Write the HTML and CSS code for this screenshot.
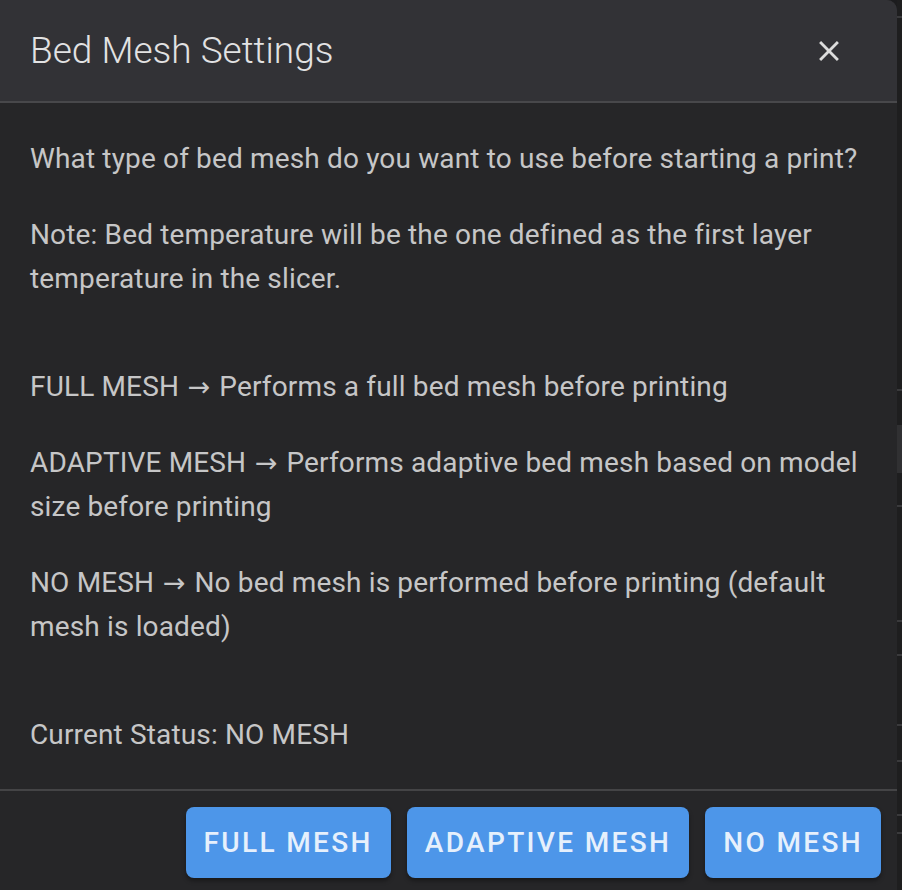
FILE: index.html
```html
<!DOCTYPE html>
<html>
<head>
<meta charset="utf-8">
<link rel="stylesheet" href="styles.css">
</head>
<body>
<div class="page">
  <div class="dialog">
    <div class="dialog-header">
      <h1 class="dialog-title">Bed Mesh Settings</h1>
      <button class="close-btn" aria-label="Close">
        <svg viewBox="0 0 24 24" width="34" height="34"><path d="M19 6.41 17.59 5 12 10.59 6.41 5 5 6.41 10.59 12 5 17.59 6.41 19 12 13.41 17.59 19 19 17.59 13.41 12z" fill="currentColor"/></svg>
      </button>
    </div>
    <div class="dialog-body">
      <p>What type of bed mesh do you want to use before starting a print?</p>
      <p>Note: Bed temperature will be the one defined as the first layer temperature in the slicer.</p>
      <div class="spacer"></div>
      <p>FULL MESH<span class="arrow"> → </span>Performs a full bed mesh before printing</p>
      <p>ADAPTIVE MESH<span class="arrow"> → </span>Performs adaptive bed mesh based on model size before printing</p>
      <p>NO MESH<span class="arrow"> → </span>No bed mesh is performed before printing (default mesh is loaded)</p>
      <div class="spacer"></div>
      <p>Current Status: NO MESH</p>
    </div>
    <div class="dialog-actions">
      <button class="btn">FULL MESH</button>
      <button class="btn">ADAPTIVE MESH</button>
      <button class="btn">NO MESH</button>
    </div>
  </div>
  <div class="side-strip">
    <div class="strip-line s1"></div>
    <div class="strip-line s2"></div>
    <div class="strip-block"></div>
    <div class="strip-line s3"></div>
    <div class="strip-line s4"></div>
    <div class="strip-line s5"></div>
    <div class="strip-line s6"></div>
    <div class="strip-line s7"></div>
    <div class="strip-line s8"></div>
    <div class="strip-line s9"></div>
  </div>
</div>
</body>
</html>
```

FILE: styles.css
```css
html, body {
  margin: 0;
  padding: 0;
  background: #1c1c1e;
  overflow: hidden;
}
.page {
  display: flex;
  width: 902px;
  height: 890px;
  font-family: Roboto, "Liberation Sans", sans-serif;
}
.dialog {
  width: 897px;
  flex: none;
  background: #262628;
  border-top-right-radius: 10px;
  overflow: hidden;
  display: flex;
  flex-direction: column;
}
.dialog-header {
  height: 103px;
  box-sizing: border-box;
  background: #323236;
  border-bottom: 2px solid #48484b;
  display: flex;
  align-items: center;
  justify-content: space-between;
  padding: 0 51px 0 30px;
  flex: none;
}
.dialog-title {
  margin: 0;
  font-size: 37px;
  font-weight: 300;
  color: #e2e2e3;
  letter-spacing: 0;
}
.close-btn {
  background: none;
  border: none;
  padding: 0;
  color: #dcdcdc;
  display: flex;
  cursor: pointer;
}
.dialog-body {
  padding: 34px 30px 32px 30px;
  color: #c6c6c7;
  font-size: 28px;
  letter-spacing: 0.15px;
  line-height: 44px;
  border-bottom: 2px solid #444446;
  flex: none;
}
.dialog-body p {
  margin: 0 0 32px 0;
}
.dialog-body p:last-child {
  margin-bottom: 0;
}
.arrow {
  font-family: "DejaVu Sans", sans-serif;
  font-size: 27px;
  line-height: 1;
}
.spacer {
  height: 32px;
}
.dialog-actions {
  display: flex;
  justify-content: flex-end;
  gap: 16px;
  padding: 16px 16px 0 0;
}
.btn {
  height: 71px;
  padding: 0 18px;
  border: none;
  border-radius: 8px;
  background: #4d96e9;
  color: #e6f0fc;
  font-family: Roboto, "Liberation Sans", sans-serif;
  font-size: 28px;
  font-weight: 500;
  letter-spacing: 2.35px;
  box-shadow: 0 3px 4px rgba(0,0,0,0.35);
}
.side-strip {
  flex: 1;
  position: relative;
  background: #1e1e1f;
}
.strip-line {
  position: absolute;
  left: 0;
  right: 0;
  height: 2px;
  background: #3a3a3c;
}
.s1 { top: 16px; }
.s2 { top: 389px; }
.s3 { top: 505px; }
.s4 { top: 620px; }
.s5 { top: 654px; }
.s6 { top: 724px; }
.s7 { top: 760px; }
.s8 { top: 814px; }
.s9 { top: 832px; }
.strip-block {
  position: absolute;
  left: 0;
  right: 0;
  top: 425px;
  height: 48px;
  background: #303032;
}
```
